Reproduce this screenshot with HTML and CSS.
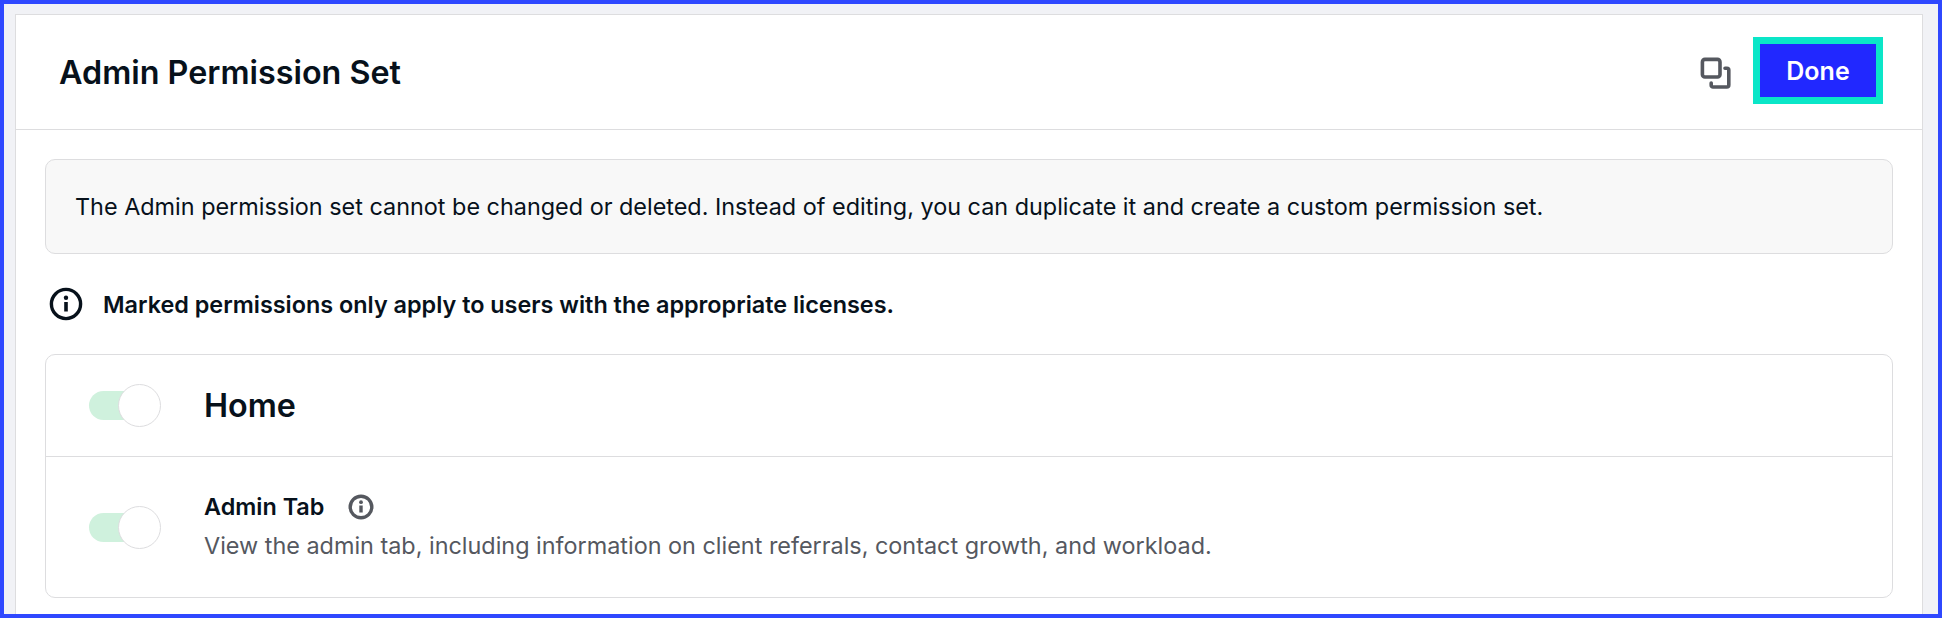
FILE: index.html
```html
<!DOCTYPE html>
<html lang="en">
<head>
<meta charset="utf-8">
<title>Admin Permission Set</title>
<link rel="stylesheet" href="styles.css">
</head>
<body>
<main class="panel">
  <header class="head">
    <h1 class="title">Admin Permission Set</h1>
    <div class="actions">
      <svg class="copy" width="32" height="32" viewBox="0 0 32 32" fill="none" stroke="#55585f" stroke-width="3.600" stroke-linejoin="round" stroke-linecap="round">
        <rect x="2.400" y="2.400" width="17.600" height="17.600" rx="2.500"/>
        <path d="M25 11.200h2a1.800 1.800 0 0 1 1.800 1.800v15a2 2 0 0 1-2 2h-13.800a1.800 1.800 0 0 1-1.800-1.800v-2.200"/>
      </svg>
      <button class="done">Done</button>
    </div>
  </header>
  <section class="content">
    <p class="alert">The Admin permission set cannot be changed or deleted. Instead of editing, you can duplicate it and create a custom permission set.</p>
    <div class="note">
      <svg class="note-icon" width="34" height="34" viewBox="0 0 34 34" fill="none">
        <circle cx="17" cy="17" r="14.600" stroke="#07111b" stroke-width="3.400"/>
        <circle cx="17" cy="10.700" r="2.200" fill="#07111b"/>
        <path d="M17 15v9.500" stroke="#07111b" stroke-width="3.600"/>
      </svg>
      <strong class="note-text">Marked permissions only apply to users with the appropriate licenses.</strong>
    </div>
    <div class="card">
      <div class="row row-home">
        <span class="toggle"><span class="knob"></span></span>
        <h2 class="home">Home</h2>
      </div>
      <div class="row row-item">
        <span class="toggle"><span class="knob"></span></span>
        <div class="item">
          <div class="item-head">
            <span class="item-name">Admin Tab</span>
            <svg width="26" height="26" viewBox="0 0 26 26" fill="none">
              <circle cx="13" cy="13" r="10.800" stroke="#55585f" stroke-width="3.400"/>
              <circle cx="13" cy="8.200" r="1.900" fill="#55585f"/>
              <path d="M13 11.500v7" stroke="#55585f" stroke-width="3.400"/>
            </svg>
          </div>
          <p class="item-desc">View the admin tab, including information on client referrals, contact growth, and workload.</p>
        </div>
      </div>
    </div>
  </section>
</main>
</body>
</html>
```

FILE: styles.css
```css
* { box-sizing: border-box; }
html, body { margin: 0; height: 100%; }
body {
  height: 618px;
  overflow: hidden;
  border: 4px solid #2f48ff;
  background: #f1f2f6;
  padding: 10px 15px 0 11px;
  font-family: Inter, "Liberation Sans", sans-serif;
  color: #07111b;
}
.panel {
  height: 100%;
  background: #fff;
  border: 1px solid #dddddf;
  border-bottom: 0;
}
.head {
  height: 115px;
  border-bottom: 1px solid #dddddf;
  display: flex;
  align-items: center;
  justify-content: space-between;
  padding: 0 46px 0 44px;
}
.title { margin: 0 0 0 -1px; font-size: 32.3px; font-weight: 600; }
.actions { display: flex; align-items: center; gap: 28px; margin-bottom: 3px; }
.copy { margin-top: 4px; }
.done {
  width: 116px;
  height: 53px;
  border: 0;
  background: #2128ff;
  outline: 7px solid #0ae6c8;
  color: #fff;
  font: 600 25px Inter, "Liberation Sans", sans-serif;
}
.content { padding: 29px 29px 0 29px; }
.alert {
  margin: 0;
  height: 95px;
  padding: 0 29px;
  display: flex;
  align-items: center;
  background: #f8f8f8;
  border: 1px solid #dddddf;
  border-radius: 10px;
  font-size: 23.4px;
}
.note { display: flex; align-items: center; gap: 20px; height: 100px; padding-left: 4px; }
.note-text { font-size: 23.4px; font-weight: 600; }
.card { border: 1px solid #dddddf; border-radius: 10px; height: 244px; }
.row { display: flex; align-items: center; padding-left: 43px; }
.row-home { height: 102px; border-bottom: 1px solid #dddddf; }
.row-item { height: 140px; }
.toggle {
  position: relative;
  display: block;
  width: 50px;
  height: 29px;
  flex: none;
  margin-right: 20px;
  background: #cff1dd;
  border-radius: 15px 0 0 15px;
}
.knob {
  position: absolute;
  left: 29px;
  top: -7px;
  width: 43px;
  height: 43px;
  background: #fff;
  border: 1px solid #dddddf;
  border-radius: 50%;
}
.home { margin: 0 0 0 45px; font-size: 32.3px; font-weight: 600; }
.item { margin-left: 45px; }
.item-head { display: flex; align-items: center; gap: 24px; margin-top: -2px; }
.item-name { font-size: 23.4px; font-weight: 600; }
.item-desc { margin: 10px 0 0; font-size: 23.4px; color: #55585f; }
```
